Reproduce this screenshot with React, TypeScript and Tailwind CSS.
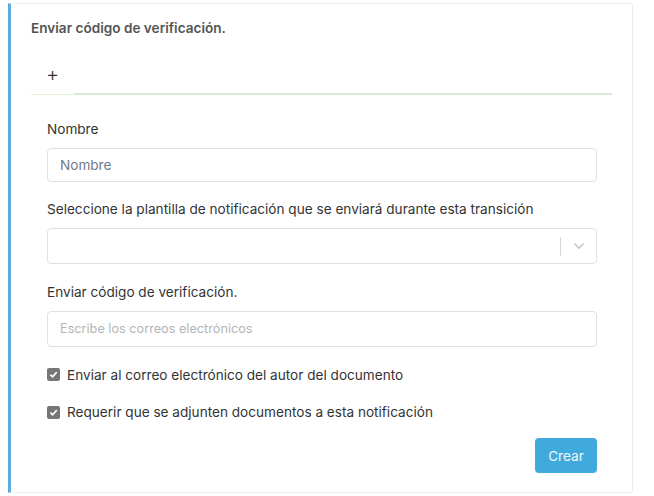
import React from "react";

function Check({ label }: { label: string }) {
  return (
    <label className="flex items-center gap-[7px] text-[13.6px] text-[#333]">
      <span className="flex h-[13px] w-[13px] items-center justify-center rounded-[2px] bg-[#767676]">
        <svg width="9" height="9" viewBox="0 0 10 10">
          <path d="M1.5 5.2 L4 7.6 L8.6 2.4" fill="none" stroke="#fff" strokeWidth="1.8" />
        </svg>
      </span>
      <span>{label}</span>
    </label>
  );
}

export default function App() {
  return (
    <div className="h-[496px] w-[654px] bg-white pl-[8px] pr-[21px] pt-[3px]" style={{ fontFamily: "Inter, 'Noto Sans', sans-serif" }}>
      <div className="flex h-[490px] flex-col rounded-r-[4px] border border-l-[3px] border-[#ececec] border-l-[#5dade2] bg-white">
        <div className="px-[20px] pt-[14px] text-[13.6px] font-semibold text-[#555]">Enviar código de verificación.</div>
        <div className="mx-[20px] mt-[26px]">
          <div className="flex h-[29px] w-[43px] items-start justify-center">
            <span className="text-[20px] leading-[20px] font-light text-[#333]">+</span>
          </div>
          <div className="flex items-end">
            <div className="h-px w-[43px] bg-[#e2f1dc]" />
            <div className="h-[2px] flex-1 bg-[#d6ebcf]" />
          </div>
        </div>
        <div className="flex flex-col pl-[36px] pr-[35px] pt-[24px]">
          <div className="text-[13.6px] text-[#333]">Nombre</div>
          <div className="mt-[8px] flex h-[34px] items-center rounded-[4px] border border-[#e1e1e1] px-[12px] text-[13.6px] text-[#6e7b88]">Nombre</div>
          <div className="mt-[17px] text-[13.6px] text-[#333]">Seleccione la plantilla de notificación que se enviará durante esta transición</div>
          <div className="mt-[9px] flex h-[36px] items-center justify-end rounded-[4px] border border-[#e1e1e1]">
            <div className="h-[19px] w-px bg-[#d6d6d6]" />
            <div className="flex w-[35px] justify-center">
              <svg width="12" height="8" viewBox="0 0 12 8">
                <path d="M1.5 1.5 L6 6 L10.5 1.5" fill="none" stroke="#c4c4c4" strokeWidth="1.6" />
              </svg>
            </div>
          </div>
          <div className="mt-[18px] text-[13.6px] text-[#333]">Enviar código de verificación.</div>
          <div className="mt-[8px] flex h-[36px] items-center rounded-[4px] border border-[#e1e1e1] px-[12px] text-[12.7px] text-[#b5b5b5]">Escribe los correos electrónicos</div>
          <div className="mt-[18px]">
            <Check label="Enviar al correo electrónico del autor del documento" />
          </div>
          <div className="mt-[17px]">
            <Check label="Requerir que se adjunten documentos a esta notificación" />
          </div>
          <div className="mt-[16px] flex justify-end">
            <button className="h-[35px] w-[62px] rounded-[4px] bg-[#40aadc] text-[13.6px] text-[#eef7fc]">Crear</button>
          </div>
        </div>
      </div>
    </div>
  );
}
